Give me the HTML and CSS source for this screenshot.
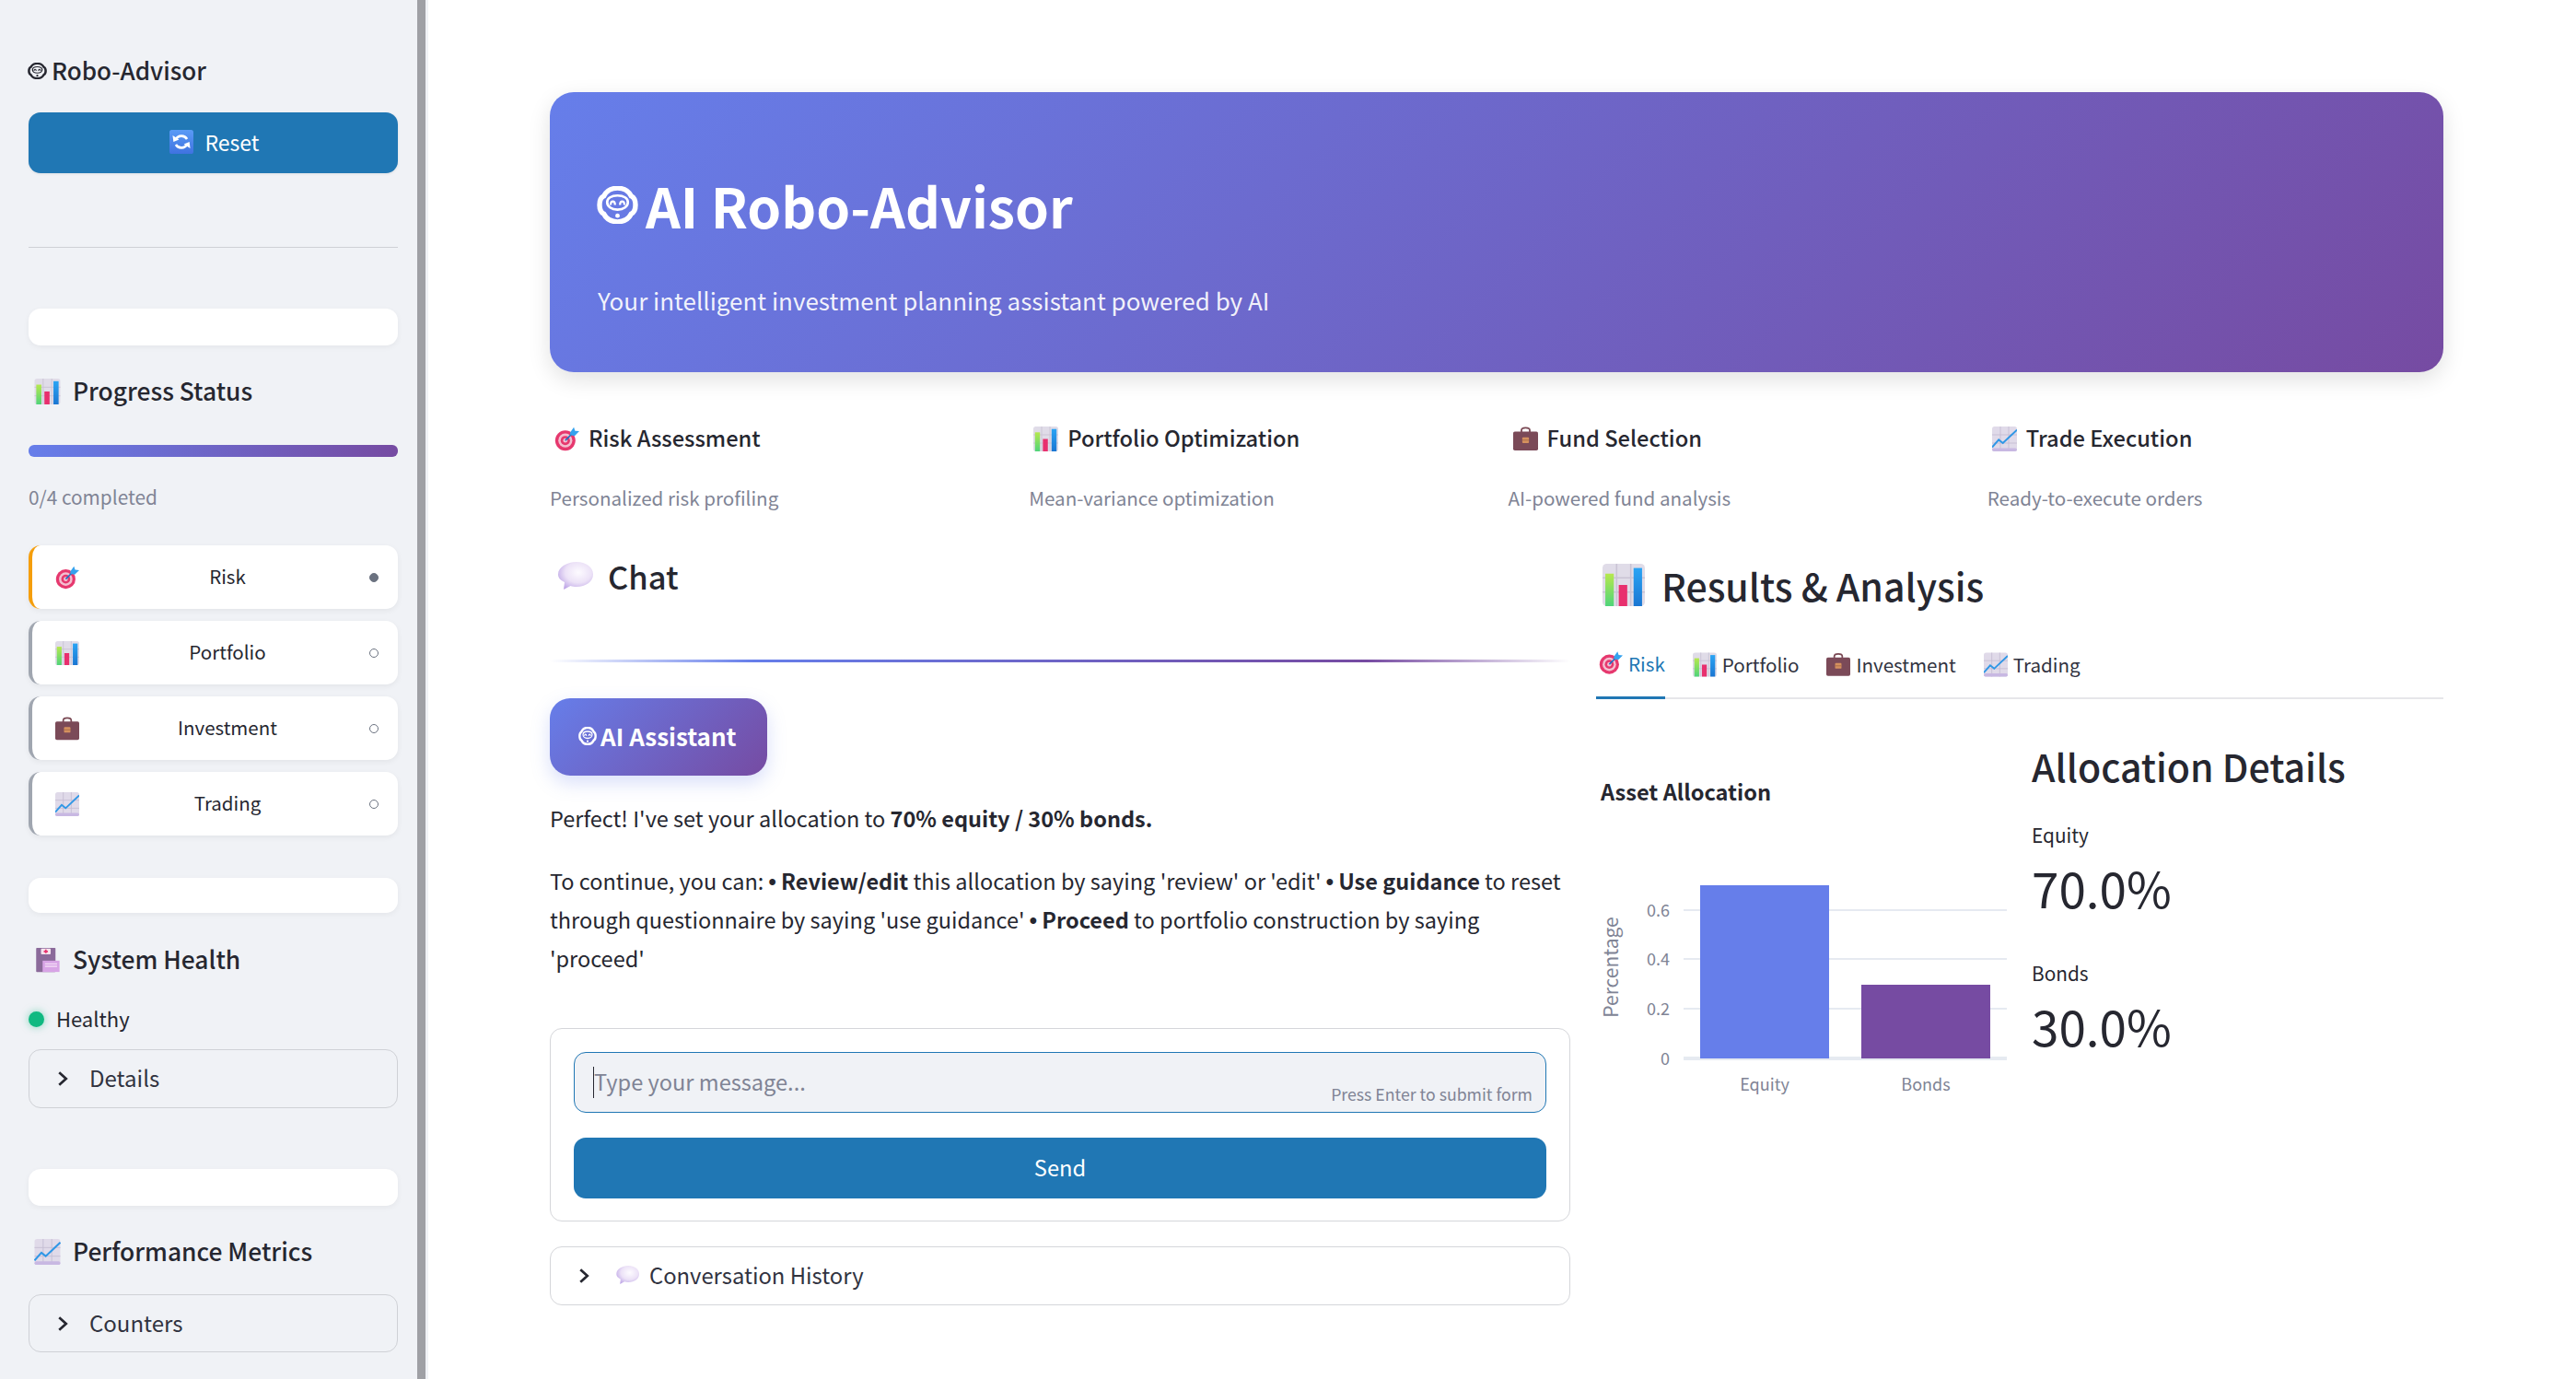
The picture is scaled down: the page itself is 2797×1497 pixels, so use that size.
FILE: index.html
```html
<!DOCTYPE html>
<html lang="en">
<head>
    <meta charset="UTF-8">
    <meta name="viewport" content="width=device-width, initial-scale=1.0">
    <title>AI Robo-Advisor</title>
    <link rel="stylesheet" href="styles.css">
</head>
<body>
    <!-- Shared emoji drawings -->
    <svg class="defs" aria-hidden="true">
        <defs>
            <linearGradient id="greenBar" x1="0" y1="0" x2="0" y2="1"><stop offset="0" stop-color="#b6e84e"/><stop offset="1" stop-color="#4fd47a"/></linearGradient>
            <linearGradient id="blueBar" x1="0" y1="0" x2="0" y2="1"><stop offset="0" stop-color="#2aa4f4"/><stop offset="1" stop-color="#1a76d2"/></linearGradient>
            <radialGradient id="bubbleFill" cx="0.58" cy="0.38" r="0.68"><stop offset="0" stop-color="#fdfbff"/><stop offset="0.55" stop-color="#ece2f7"/><stop offset="1" stop-color="#bda5e6"/></radialGradient>
            <linearGradient id="reloadFill" x1="0" y1="0" x2="0" y2="1"><stop offset="0" stop-color="#5a9bf6"/><stop offset="1" stop-color="#3f72e0"/></linearGradient>
        </defs>
        <symbol id="i-robot" viewBox="1 2 30 28" preserveAspectRatio="none">
            <path d="M6 9.500C8 5.500 11.500 3.500 16 3.500s8 2 10 6c2 1 3 3.200 3 6.500s-1 5.500-3 6.500c-2 4-5.500 6-10 6s-8-2-10-6c-2-1-3-3.200-3-6.500S4 10.500 6 9.500z" fill="none" stroke="currentColor" stroke-width="3.600"/>
            <path d="M8.500 14c0-3 3-5 7.500-5s7.500 2 7.500 5-3 5.500-7.500 5.500S8.500 17 8.500 14z" fill="none" stroke="currentColor" stroke-width="1.800"/>
            <path d="M11 16c0-3.500 3.200-3.500 3.200 0M17.800 16c0-3.500 3.200-3.500 3.200 0" fill="none" stroke="currentColor" stroke-width="1.500"/>
            <circle cx="16" cy="24" r="1.600" fill="currentColor"/>
        </symbol>
        <symbol id="i-target" viewBox="0 0 32 32">
            <circle cx="14" cy="18" r="13" fill="#e6386e"/>
            <circle cx="14" cy="18" r="9" fill="#f4bfd0"/>
            <circle cx="14" cy="18" r="6" fill="#e6386e"/>
            <circle cx="14" cy="18" r="2.800" fill="#f4bfd0"/>
            <path d="M14 18 24 8" stroke="#1f6fc4" stroke-width="2"/>
            <path d="M20 8 25 1l1.500 4.500L32 6l-6 6-5.500-1z" fill="#35a2ee"/>
        </symbol>
        <symbol id="i-chart" viewBox="1 1 30 30">
            <rect x="1" y="1" width="30" height="30" rx="3" fill="#e0dce8"/>
            <path d="M11 1v30M21 1v30M1 11h30M1 21h30" stroke="#c9c3d4" stroke-width="1"/>
            <rect x="3" y="8" width="6" height="23" fill="url(#greenBar)"/>
            <rect x="12.500" y="16" width="6" height="15" fill="#e8306e"/>
            <rect x="23" y="4" width="6" height="27" fill="url(#blueBar)"/>
        </symbol>
        <symbol id="i-case" viewBox="1 1 30 30">
            <path d="M11 8V5.500C11 3.500 12.500 2.500 16 2.500s5 1 5 3V8" fill="none" stroke="#7b4a55" stroke-width="2"/>
            <rect x="1" y="7" width="30" height="23" rx="2" fill="#7b4a58"/>
            <rect x="12" y="14" width="8" height="7" rx="1" fill="#d5915f"/>
            <path d="M12 17.500h8" stroke="#a86a45" stroke-width="1"/>
        </symbol>
        <symbol id="i-trend" viewBox="1 1 30 30">
            <rect x="1" y="1" width="30" height="30" rx="3" fill="#e0dae9"/>
            <path d="M11 1v30M21 1v30M1 11h30M1 21h30" stroke="#c5bdd3" stroke-width="1"/>
            <rect x="1" y="27" width="30" height="4" rx="2" fill="#c8b8e2"/>
            <polyline points="1,26 9,17 14,21 31,5" fill="none" stroke="#2f97e6" stroke-width="2.200"/>
        </symbol>
        <symbol id="i-bubble" viewBox="0 0 40 30" preserveAspectRatio="none">
            <path d="M22 0c10 0 18 5.500 18 13.500S32 27 22 27c-2.500 0-4.500-.3-6.500-1L8 30l1-8C3.500 19.500 2 16.500 2 13.500 2 5.500 12 0 22 0z" fill="url(#bubbleFill)"/>
        </symbol>
        <symbol id="i-reload" viewBox="1 1 30 30">
            <rect x="1" y="1" width="30" height="30" rx="3" fill="url(#reloadFill)"/>
            <path d="M23 12.500A8 8 0 0 0 9 13" fill="none" stroke="#fff" stroke-width="3"/>
            <path d="M9 19.500A8 8 0 0 0 23 19" fill="none" stroke="#fff" stroke-width="3"/>
            <path d="M5 8l1 8 7-3zM27 24l-1-8-7 3z" fill="#fff"/>
        </symbol>
        <symbol id="i-hospital" viewBox="0 0 32 32">
            <rect x="2" y="1" width="24" height="30" rx="1" fill="#8b6a9a"/>
            <rect x="8" y="2" width="12" height="7" rx="1" fill="#f5e4ee"/>
            <path d="M14 3.200v4.600M11.500 5.500h5" stroke="#e8306e" stroke-width="2"/>
            <rect x="10" y="17" width="21" height="14" fill="#d8a4e6"/>
            <path d="M13 21h15M13 24h15" stroke="#f2dcf6" stroke-width="1.500"/>
        </symbol>
    </svg>

    <div class="app">
        <aside class="sidebar">
            <h1 class="brand"><svg class="icon robot"><use href="#i-robot"/></svg>Robo-Advisor</h1>
            <button class="btn reset"><svg class="icon"><use href="#i-reload"/></svg>Reset</button>
            <hr class="rule">

            <div class="blank first"></div>
            <h3 class="side-head progress-head"><svg class="icon"><use href="#i-chart"/></svg>Progress Status</h3>
            <div class="progress"></div>
            <p class="progress-text">0/4 completed</p>

            <ul class="steps">
                <li class="step active"><svg class="icon"><use href="#i-target"/></svg><span>Risk</span><i class="dot filled"></i></li>
                <li class="step"><svg class="icon"><use href="#i-chart"/></svg><span>Portfolio</span><i class="dot"></i></li>
                <li class="step"><svg class="icon"><use href="#i-case"/></svg><span>Investment</span><i class="dot"></i></li>
                <li class="step"><svg class="icon"><use href="#i-trend"/></svg><span>Trading</span><i class="dot"></i></li>
            </ul>

            <div class="blank second"></div>
            <h3 class="side-head health-head"><svg class="icon"><use href="#i-hospital"/></svg>System Health</h3>
            <div class="health"><i class="health-dot"></i>Healthy</div>
            <div class="side-expander details">
                <svg class="chevron" viewBox="0 0 12 12"><path d="M3.500 1.500 8.500 6l-5 4.500"/></svg>Details
            </div>

            <div class="blank third"></div>
            <h3 class="side-head metrics-head"><svg class="icon"><use href="#i-trend"/></svg>Performance Metrics</h3>
            <div class="side-expander counters">
                <svg class="chevron" viewBox="0 0 12 12"><path d="M3.500 1.500 8.500 6l-5 4.500"/></svg>Counters
            </div>
        </aside>
        <div class="scrollbar"></div>

        <main class="main">
            <section class="hero">
                <h1><svg class="icon robot"><use href="#i-robot"/></svg>AI Robo-Advisor</h1>
                <p>Your intelligent investment planning assistant powered by AI</p>
            </section>

            <section class="features">
                <div class="feature">
                    <h4><svg class="icon"><use href="#i-target"/></svg>Risk Assessment</h4>
                    <p>Personalized risk profiling</p>
                </div>
                <div class="feature">
                    <h4><svg class="icon"><use href="#i-chart"/></svg>Portfolio Optimization</h4>
                    <p>Mean-variance optimization</p>
                </div>
                <div class="feature">
                    <h4><svg class="icon"><use href="#i-case"/></svg>Fund Selection</h4>
                    <p>AI-powered fund analysis</p>
                </div>
                <div class="feature">
                    <h4><svg class="icon"><use href="#i-trend"/></svg>Trade Execution</h4>
                    <p>Ready-to-execute orders</p>
                </div>
            </section>

            <div class="columns">
                <section class="chat">
                    <h2 class="chat-head"><svg class="icon"><use href="#i-bubble"/></svg>Chat</h2>
                    <div class="divider"></div>
                    <div class="badge"><svg class="icon robot"><use href="#i-robot"/></svg>AI Assistant</div>
                    <p class="msg first-msg">Perfect! I've set your allocation to <b>70% equity / 30% bonds.</b></p>
                    <p class="msg">To continue, you can: <span class="bullet">•</span> <b>Review/edit</b> this allocation by saying 'review' or 'edit' <span class="bullet">•</span> <b>Use guidance</b> to reset through questionnaire by saying 'use guidance' <span class="bullet">•</span> <b>Proceed</b> to portfolio construction by saying 'proceed'</p>

                    <form class="chat-form">
                        <div class="input-wrap">
                            <input type="text" class="chat-input" placeholder="Type your message...">
                            <span class="caret"></span>
                            <span class="hint">Press Enter to submit form</span>
                        </div>
                        <button type="button" class="btn send">Send</button>
                    </form>

                    <div class="history">
                        <svg class="chevron" viewBox="0 0 12 12"><path d="M3.500 1.500 8.500 6l-5 4.500"/></svg>
                        <svg class="icon"><use href="#i-bubble"/></svg>Conversation History
                    </div>
                </section>

                <section class="results">
                    <h2 class="results-head"><svg class="icon"><use href="#i-chart"/></svg>Results &amp; Analysis</h2>
                    <div class="tabs">
                        <div class="tab active"><svg class="icon"><use href="#i-target"/></svg>Risk</div>
                        <div class="tab"><svg class="icon"><use href="#i-chart"/></svg>Portfolio</div>
                        <div class="tab"><svg class="icon"><use href="#i-case"/></svg>Investment</div>
                        <div class="tab"><svg class="icon"><use href="#i-trend"/></svg>Trading</div>
                    </div>
                    <div class="panel">
                        <div class="chart-box">
                            <h5>Asset Allocation</h5>
                            <svg class="chart" viewBox="0 0 461 300">
                                <g class="grid">
                                    <line x1="95" x2="446" y1="88" y2="88"/>
                                    <line x1="95" x2="446" y1="141" y2="141"/>
                                    <line x1="95" x2="446" y1="195" y2="195"/>
                                </g>
                                <line class="axis" x1="95" x2="446" y1="249" y2="249"/>
                                <rect class="bar-equity" x="113" y="61" width="140" height="188"/>
                                <rect class="bar-bonds" x="288" y="169" width="140" height="80"/>
                                <g class="ticks">
                                    <text x="80" y="95">0.6</text>
                                    <text x="80" y="148">0.4</text>
                                    <text x="80" y="202">0.2</text>
                                    <text x="80" y="256">0</text>
                                </g>
                                <g class="labels">
                                    <text x="183" y="284">Equity</text>
                                    <text x="358" y="284">Bonds</text>
                                </g>
                                <text class="y-title" transform="translate(24 150) rotate(-90)">Percentage</text>
                            </svg>
                        </div>
                        <div class="details-box">
                            <h2>Allocation Details</h2>
                            <div class="metric-label">Equity</div>
                            <div class="metric-value">70.0%</div>
                            <div class="metric-label second-metric">Bonds</div>
                            <div class="metric-value">30.0%</div>
                        </div>
                    </div>
                </section>
            </div>
        </main>
    </div>
</body>
</html>
```

FILE: styles.css
```css
/* Basic reset */
* {
    margin: 0;
    padding: 0;
    box-sizing: border-box;
}

body {
    font-family: "Noto Sans CJK SC", "Noto Sans", sans-serif;
    color: #262730;
    background-color: #fff;
    height: 100vh;
    overflow: hidden;
}

.defs {
    position: absolute;
    width: 0;
    height: 0;
}

.icon {
    flex: none;
    display: block;
}

.app {
    display: flex;
    height: 100vh;
}

/* Sidebar */
.sidebar {
    width: 453px;
    flex: none;
    background-color: #f0f2f6;
    padding: 55px 21px 0 31px;
}

.scrollbar {
    width: 12px;
    flex: none;
    background: linear-gradient(to right, #9fa0a5 9px, #f0f2f6 9px);
}

.brand {
    display: flex;
    align-items: center;
    gap: 5px;
    height: 40px;
    font-size: 26px;
    font-weight: 500;
}

.brand .icon {
    width: 21px;
    height: 18px;
    margin: 3px 0 0 -1px;
}

.btn {
    display: flex;
    align-items: center;
    justify-content: center;
    width: 100%;
    border: none;
    border-radius: 13px;
    background-color: #2077b4;
    color: #fff;
    font-family: inherit;
}

.reset {
    height: 66px;
    margin-top: 27px;
    padding: 0 0 3px 3px;
    gap: 12px;
    font-size: 23px;
    box-shadow: 0 1px 3px rgba(0, 0, 0, 0.08);
}

.reset .icon {
    width: 26px;
    height: 26px;
}

.rule {
    margin-top: 80px;
    border: none;
    border-top: 1px solid #cfd1d6;
}

.blank {
    background-color: #fff;
    border-radius: 13px;
    box-shadow: 0 2px 6px rgba(0, 0, 0, 0.05);
}

.blank.first {
    height: 40px;
    margin-top: 66px;
}

.blank.second {
    height: 38px;
    margin-top: 46px;
}

.blank.third {
    height: 40px;
    margin-top: 66px;
}

.side-head {
    display: flex;
    align-items: center;
    gap: 13px;
    height: 40px;
    padding: 0 0 3px 6px;
    font-size: 26.400px;
    font-weight: 500;
}

.side-head .icon {
    width: 29px;
    height: 28px;
    margin-top: 3px;
}

.progress-head {
    margin-top: 30px;
}

.health-head {
    margin-top: 31px;
}

.metrics-head {
    margin-top: 30px;
}

.progress {
    height: 13px;
    margin-top: 38px;
    border-radius: 6px;
    background: linear-gradient(90deg, #667eea, #764ba2);
}

.progress-text {
    margin-top: 28px;
    line-height: 30px;
    font-size: 20.800px;
    color: #808495;
}

/* Step cards */
.steps {
    list-style: none;
    display: flex;
    flex-direction: column;
    gap: 13px;
    margin-top: 38px;
}

.step {
    display: flex;
    align-items: center;
    height: 69px;
    padding: 0 21px 0 25px;
    background-color: #fff;
    border-left: 4px solid #a0a6b0;
    border-radius: 13px;
    box-shadow: 0 2px 6px rgba(0, 0, 0, 0.06);
    font-size: 20.500px;
}

.step.active {
    border-left-color: #f59e0b;
}

.step .icon {
    width: 26px;
    height: 28px;
}

.step span {
    flex: 1;
    text-align: center;
    padding: 0 0 3px 7px;
}

.dot {
    display: block;
    width: 10px;
    height: 10px;
    border: 1px solid #6b7280;
    border-radius: 50%;
}

.dot.filled {
    background-color: #6b7280;
}

.health {
    display: flex;
    align-items: center;
    gap: 13px;
    height: 30px;
    margin-top: 29px;
    padding-bottom: 3px;
    font-size: 22px;
}

.health-dot {
    display: block;
    width: 17px;
    height: 17px;
    margin-top: 3px;
    border-radius: 50%;
    background-color: #10b981;
    box-shadow: 0 0 8px rgba(16, 185, 129, 0.5);
}

.side-expander {
    display: flex;
    align-items: center;
    border: 1px solid #cfd1d6;
    border-radius: 13px;
    padding: 0 0 3px 27px;
    font-size: 24px;
    color: #31333f;
}

.side-expander .chevron {
    margin: 3px 20px 0 0;
}

.details {
    height: 64px;
    margin-top: 18px;
}

.counters {
    height: 63px;
    margin-top: 26px;
}

.chevron {
    width: 18px;
    height: 18px;
    flex: none;
    fill: none;
    stroke: #262730;
    stroke-width: 1.800;
}

/* Main area */
.main {
    flex: 1;
    padding: 100px 144px 0 132px;
}

.hero {
    height: 304px;
    padding: 92px 52px 0;
    border-radius: 26px;
    background: linear-gradient(135deg, #667eea 0%, #764ba2 100%);
    box-shadow: 0 8px 24px rgba(0, 0, 0, 0.12);
    color: #fff;
}

.hero h1 {
    display: flex;
    align-items: center;
    gap: 8px;
    height: 60px;
    font-size: 59px;
    font-weight: 700;
}

.hero .icon {
    width: 45px;
    height: 41px;
    margin-left: -1px;
}

.hero p {
    margin-top: 54px;
    line-height: 40px;
    font-size: 26px;
    color: rgba(255, 255, 255, 0.92);
}

.features {
    display: grid;
    grid-template-columns: repeat(4, 1fr);
    column-gap: 25px;
    margin-top: 54px;
}

.feature h4 {
    display: flex;
    align-items: center;
    gap: 10px;
    height: 36px;
    padding: 0 0 3px 5px;
    font-size: 23.700px;
    font-weight: 500;
}

.feature .icon {
    width: 27px;
    height: 27px;
    margin-top: 3px;
}

.feature p {
    margin-top: 31px;
    line-height: 30px;
    font-size: 20.600px;
    color: #808495;
}

.columns {
    display: grid;
    grid-template-columns: 1108px 920px;
    column-gap: 28px;
    margin-top: 45px;
}

/* Chat column */
.chat-head {
    display: flex;
    align-items: center;
    gap: 16px;
    height: 52px;
    padding: 0 0 3px 7px;
    font-size: 34.500px;
    font-weight: 500;
}

.chat-head .icon {
    width: 40px;
    height: 30px;
}

.divider {
    height: 3px;
    margin-top: 64px;
    background: linear-gradient(90deg, transparent, #667eea 20%, #764ba2 80%, transparent);
}

.badge {
    display: flex;
    align-items: center;
    gap: 4px;
    width: 236px;
    height: 84px;
    margin-top: 39px;
    padding: 0 0 3px 31px;
    border-radius: 22px;
    background: linear-gradient(135deg, #667eea, #764ba2);
    box-shadow: 0 8px 20px rgba(102, 126, 234, 0.25);
    color: #fff;
    font-size: 26px;
    font-weight: 700;
}

.badge .icon {
    width: 20px;
    height: 20px;
}

.msg {
    margin-top: 26px;
    line-height: 42px;
    font-size: 23.500px;
}

.msg.first-msg {
    margin-top: 25px;
}

.msg b {
    font-weight: 600;
}

.bullet {
    font-family: "Liberation Sans", sans-serif;
    font-weight: 700;
    line-height: 1;
}

.chat-form {
    height: 210px;
    margin-top: 55px;
    padding: 25px;
    border: 1px solid #d5d6da;
    border-radius: 13px;
}

.input-wrap {
    position: relative;
}

.chat-input {
    display: block;
    width: 100%;
    height: 66px;
    padding: 0 21px 3px;
    border: 1px solid #2077b4;
    border-radius: 13px;
    outline: none;
    background-color: #f0f2f6;
    font-family: inherit;
    font-size: 23.600px;
}

.chat-input::placeholder {
    color: #808495;
    opacity: 1;
}

.caret {
    position: absolute;
    left: 21px;
    top: 16px;
    width: 1px;
    height: 34px;
    background-color: #262730;
}

.hint {
    position: absolute;
    right: 15px;
    bottom: 8px;
    font-size: 17.700px;
    color: #808495;
}

.send {
    height: 66px;
    margin-top: 27px;
    padding-bottom: 3px;
    font-size: 23.700px;
}

.history {
    display: flex;
    align-items: center;
    height: 64px;
    margin-top: 27px;
    padding: 0 0 3px 27px;
    border: 1px solid #d5d6da;
    border-radius: 13px;
    font-size: 23.800px;
    color: #31333f;
}

.history .chevron {
    margin: 3px 25px 0 0;
}

.history .icon {
    width: 26px;
    height: 20px;
    margin-right: 11px;
}

/* Results column */
.results-head {
    display: flex;
    align-items: center;
    gap: 18px;
    height: 60px;
    margin-top: 6px;
    padding: 0 0 3px 7px;
    font-size: 41px;
    font-weight: 500;
}

.results-head .icon {
    width: 46px;
    height: 46px;
}

.tabs {
    display: flex;
    gap: 26px;
    height: 59px;
    margin-top: 34px;
    border-bottom: 2px solid #e6e6ea;
}

.tab {
    display: flex;
    align-items: center;
    gap: 6px;
    height: 59px;
    padding: 0 0 17px 4px;
    font-size: 20.600px;
    color: #31333f;
}

.tab.active {
    padding-left: 3px;
    color: #2077b4;
    border-bottom: 3px solid #2077b4;
}

.tab .icon {
    width: 26px;
    height: 27px;
}

.panel {
    display: grid;
    grid-template-columns: 461px 1fr;
    column-gap: 12px;
}

.chart-box {
    padding-top: 83px;
}

.chart-box h5 {
    height: 34px;
    padding-left: 5px;
    line-height: 34px;
    font-size: 23.600px;
    font-weight: 700;
}

.chart {
    display: block;
    width: 461px;
    height: 300px;
    margin-top: 24px;
}

.grid line {
    stroke: #e6eaf1;
    stroke-width: 2;
}

.axis {
    stroke: #e6eaf1;
    stroke-width: 4;
}

.bar-equity {
    fill: #667eea;
}

.bar-bonds {
    fill: #764ba2;
}

.chart text {
    font-size: 18px;
    fill: #808495;
}

.ticks text {
    text-anchor: end;
}

.labels text,
.chart .y-title {
    text-anchor: middle;
}

.chart .y-title {
    font-size: 21px;
}

.details-box {
    padding-top: 42px;
}

.details-box h2 {
    height: 60px;
    line-height: 60px;
    font-size: 41px;
    font-weight: 500;
}

.metric-label {
    margin-top: 30px;
    line-height: 30px;
    font-size: 20.800px;
}

.metric-label.second-metric {
    margin-top: 43px;
}

.metric-value {
    margin-top: 7px;
    line-height: 70px;
    font-size: 53px;
}
```
